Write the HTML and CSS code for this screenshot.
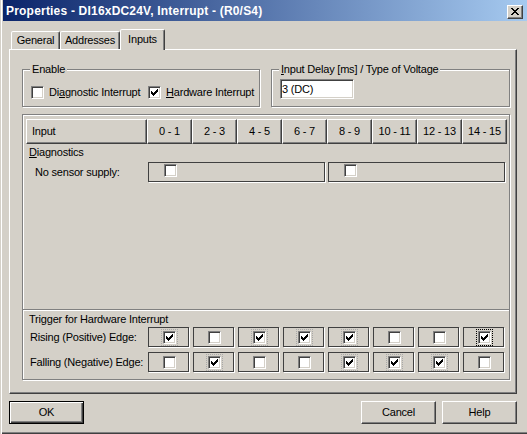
FILE: index.html
```html
<!DOCTYPE html>
<html>
<head>
<meta charset="utf-8">
<title>Properties</title>
<link rel="stylesheet" href="styles.css">
</head>
<body>
<div class="window">
  <div class="titlebar">
    <span class="title">Properties - DI16xDC24V, Interrupt - (R0/S4)</span>
    <div class="close"><svg width="8" height="7" viewBox="0 0 8 7" shape-rendering="crispEdges"><path fill="#000" d="M0 0h2v1H0zM6 0h2v1H6zM1 1h2v1H1zM5 1h2v1H5zM2 2h4v1H2zM3 3h2v1H3zM2 4h4v1H2zM1 5h2v1H1zM5 5h2v1H5zM0 6h2v1H0zM6 6h2v1H6z"/></svg></div>
  </div>
  <div class="content">
    <div class="tabs">
      <div class="tab tab-general">General</div>
      <div class="tab tab-addresses">Addresses</div>
      <div class="tab tab-inputs active">Inputs</div>
    </div>
    <div class="panel">
      <div class="groups">
        <div class="group enable">
          <div class="legend">Enable</div>
          <div class="enable-row">
            <div class="opt opt-first"><span class="cb"></span><span>Di<u>a</u>gnostic Interrupt</span></div>
            <div class="opt"><span class="cb"><svg viewBox="1 1 11 11" shape-rendering="crispEdges"><path d="M9 3h1v1H9zM8 4h2v1H8zM3 5h1v1H3zM7 5h3v1H7zM3 6h2v1H3zM6 6h3v1H6zM3 7h5v1H3zM4 8h3v1H4zM5 9h1v1H5z"/></svg></span><span><u>H</u>ardware Interrupt</span></div>
          </div>
        </div>
        <div class="group delay">
          <div class="legend"><u>I</u>nput Delay [ms] / Type of Voltage</div>
          <div class="textbox">3 (DC)</div>
        </div>
      </div>
      <div class="table">
        <div class="upper">
          <div class="grid header">
            <div class="hcell hfirst">Input</div>
            <div class="hcell">0 - 1</div>
            <div class="hcell">2 - 3</div>
            <div class="hcell">4 - 5</div>
            <div class="hcell">6 - 7</div>
            <div class="hcell">8 - 9</div>
            <div class="hcell">10 - 11</div>
            <div class="hcell">12 - 13</div>
            <div class="hcell">14 - 15</div>
          </div>
          <div class="section-label"><u>D</u>iagnostics</div>
          <div class="grid sensor-row">
            <div class="row-label sensor-label">No sensor supply:</div>
            <div class="sensor-box"><span class="cb"></span></div>
            <div class="sensor-box"><span class="cb"></span></div>
          </div>
        </div>
        <div class="lower">
          <div class="trig-label">Trigger for Hardware Interrupt</div>
          <div class="grid trig-row">
            <div class="row-label">Rising (Positive) Edge:</div>
            <div class="tbox"><span class="cb fx"><svg viewBox="1 1 11 11" shape-rendering="crispEdges"><path d="M9 3h1v1H9zM8 4h2v1H8zM3 5h1v1H3zM7 5h3v1H7zM3 6h2v1H3zM6 6h3v1H6zM3 7h5v1H3zM4 8h3v1H4zM5 9h1v1H5z"/></svg></span></div>
            <div class="tbox"><span class="cb"></span></div>
            <div class="tbox"><span class="cb fx"><svg viewBox="1 1 11 11" shape-rendering="crispEdges"><path d="M9 3h1v1H9zM8 4h2v1H8zM3 5h1v1H3zM7 5h3v1H7zM3 6h2v1H3zM6 6h3v1H6zM3 7h5v1H3zM4 8h3v1H4zM5 9h1v1H5z"/></svg></span></div>
            <div class="tbox"><span class="cb fx"><svg viewBox="1 1 11 11" shape-rendering="crispEdges"><path d="M9 3h1v1H9zM8 4h2v1H8zM3 5h1v1H3zM7 5h3v1H7zM3 6h2v1H3zM6 6h3v1H6zM3 7h5v1H3zM4 8h3v1H4zM5 9h1v1H5z"/></svg></span></div>
            <div class="tbox"><span class="cb fx"><svg viewBox="1 1 11 11" shape-rendering="crispEdges"><path d="M9 3h1v1H9zM8 4h2v1H8zM3 5h1v1H3zM7 5h3v1H7zM3 6h2v1H3zM6 6h3v1H6zM3 7h5v1H3zM4 8h3v1H4zM5 9h1v1H5z"/></svg></span></div>
            <div class="tbox"><span class="cb"></span></div>
            <div class="tbox"><span class="cb"></span></div>
            <div class="tbox"><span class="cb focus"><svg viewBox="1 1 11 11" shape-rendering="crispEdges"><path d="M9 3h1v1H9zM8 4h2v1H8zM3 5h1v1H3zM7 5h3v1H7zM3 6h2v1H3zM6 6h3v1H6zM3 7h5v1H3zM4 8h3v1H4zM5 9h1v1H5z"/></svg></span></div>
          </div>
          <div class="grid trig-row trig-row2">
            <div class="row-label">Falling (Negative) Edge:</div>
            <div class="tbox"><span class="cb"></span></div>
            <div class="tbox"><span class="cb fx"><svg viewBox="1 1 11 11" shape-rendering="crispEdges"><path d="M9 3h1v1H9zM8 4h2v1H8zM3 5h1v1H3zM7 5h3v1H7zM3 6h2v1H3zM6 6h3v1H6zM3 7h5v1H3zM4 8h3v1H4zM5 9h1v1H5z"/></svg></span></div>
            <div class="tbox"><span class="cb"></span></div>
            <div class="tbox"><span class="cb"></span></div>
            <div class="tbox"><span class="cb fx"><svg viewBox="1 1 11 11" shape-rendering="crispEdges"><path d="M9 3h1v1H9zM8 4h2v1H8zM3 5h1v1H3zM7 5h3v1H7zM3 6h2v1H3zM6 6h3v1H6zM3 7h5v1H3zM4 8h3v1H4zM5 9h1v1H5z"/></svg></span></div>
            <div class="tbox"><span class="cb fx"><svg viewBox="1 1 11 11" shape-rendering="crispEdges"><path d="M9 3h1v1H9zM8 4h2v1H8zM3 5h1v1H3zM7 5h3v1H7zM3 6h2v1H3zM6 6h3v1H6zM3 7h5v1H3zM4 8h3v1H4zM5 9h1v1H5z"/></svg></span></div>
            <div class="tbox"><span class="cb fx"><svg viewBox="1 1 11 11" shape-rendering="crispEdges"><path d="M9 3h1v1H9zM8 4h2v1H8zM3 5h1v1H3zM7 5h3v1H7zM3 6h2v1H3zM6 6h3v1H6zM3 7h5v1H3zM4 8h3v1H4zM5 9h1v1H5z"/></svg></span></div>
            <div class="tbox"><span class="cb"></span></div>
          </div>
        </div>
      </div>
    </div>
    <div class="buttons">
      <div class="btn default">OK</div>
      <div class="spacer"></div>
      <div class="btn">Cancel</div>
      <div class="btn btn-help">Help</div>
    </div>
  </div>
</div>
</body>
</html>
```
FILE: styles.css
```css
* { box-sizing: border-box; }
html, body { margin: 0; padding: 0; }
body {
  width: 527px;
  height: 434px;
  overflow: hidden;
  background: #d4d0c8;
  font-family: "Liberation Sans", Arial, sans-serif;
  font-size: 11px;
  line-height: 13px;
  letter-spacing: -0.2px;
  color: #000;
}
u { text-decoration: underline; text-underline-offset: 1px; }

.window {
  width: 527px;
  height: 434px;
  background: #d4d0c8;
  box-shadow: inset 1px 0 #d4d0c8, inset 2px 0 #fff, inset 0 -1px #404040, inset 0 -2px #808080;
}

.titlebar {
  height: 21px;
  margin-left: 3px;
  padding: 2px 4px 0 3px;
  display: flex;
  align-items: center;
  justify-content: space-between;
  background: linear-gradient(to right, #0a246a, #a6caf0);
}
.title {
  color: #fff;
  font-weight: bold;
  font-size: 12px;
  letter-spacing: 0.2px;
  white-space: nowrap;
}
.close {
  width: 16px;
  height: 14px;
  background: #d4d0c8;
  border: 1px solid;
  border-color: #fff #404040 #404040 #fff;
  box-shadow: inset -1px -1px #808080;
  display: flex;
  align-items: center;
  justify-content: center;
}
.close svg { display: block; }

.content { padding: 0 10px 0 9px; }

.tabs {
  height: 28px;
  padding-left: 2px;
  display: flex;
  align-items: flex-end;
}
.tab {
  height: 18px;
  border: 1px solid;
  border-bottom: none;
  border-color: #fff #404040 transparent #fff;
  border-radius: 2px 2px 0 0;
  box-shadow: inset -1px 0 #808080;
  display: flex;
  align-items: center;
  justify-content: center;
  white-space: nowrap;
  background: #d4d0c8;
}
.tab-general { width: 49px; }
.tab-addresses { width: 60px; }
.tab-inputs { width: 45px; }
.tab.active {
  height: 21px;
  margin-bottom: -1px;
  padding-bottom: 2px;
  position: relative;
  z-index: 1;
}

.panel {
  height: 345px;
  border: 1px solid;
  border-color: #fff #404040 #404040 #fff;
  box-shadow: inset -1px -1px #808080;
  padding: 19px 0 0 12px;
}

.groups { display: flex; gap: 11px; }
.group {
  height: 38px;
  border: 1px solid #808080;
  box-shadow: inset 1px 1px #fff, 1px 1px #fff;
}
.enable { width: 238px; }
.delay { width: 239px; }
.legend {
  width: fit-content;
  margin: -7px 0 0 7px;
  padding: 0 2px;
  background: #d4d0c8;
  white-space: nowrap;
}
.enable-row {
  display: flex;
  align-items: center;
  margin: 10px 0 0 8px;
}
.opt { display: flex; align-items: center; gap: 5px; white-space: nowrap; }
.opt-first { width: 117px; }

.textbox {
  width: 74px;
  height: 20px;
  margin: 3px 0 0 8px;
  background: #fff;
  border: 1px solid;
  border-color: #808080 #fff #fff #808080;
  box-shadow: inset 1px 1px #404040, inset -1px -1px #d4d0c8;
  padding-left: 1px;
  line-height: 18px;
}

.cb {
  display: block;
  flex: none;
  width: 13px;
  height: 13px;
  background: #fff;
  border: 1px solid;
  border-color: #808080 #fff #fff #808080;
  box-shadow: inset 1px 1px #404040, inset -1px -1px #d4d0c8;
}
.cb svg { display: block; width: 11px; height: 11px; fill: #000; }
.cb.fx { outline: 1px dotted #a8a8a8; outline-offset: 1px; }
.cb.focus { outline: 1px dotted #000; outline-offset: 1px; }

.table {
  width: 488px;
  height: 266px;
  margin-top: 7px;
  border: 1px solid #808080;
  box-shadow: inset 1px 1px #fff, 1px 1px #fff;
  display: flex;
  flex-direction: column;
}
.upper { flex: 1; padding: 4px 0 0 3px; }
.grid {
  display: grid;
  grid-template-columns: 121px repeat(8, 45px);
}
.header { height: 25px; }
.hcell {
  border: 1px solid;
  border-color: #fff #404040 #404040 #fff;
  box-shadow: inset -1px -1px #808080;
  display: flex;
  align-items: center;
  justify-content: center;
  white-space: nowrap;
}
.hfirst { justify-content: flex-start; padding-left: 5px; }

.section-label { margin-top: 2px; padding-left: 3px; }
.sensor-row { margin-top: 3px; height: 20px; }
.row-label { align-self: center; padding-left: 4px; white-space: nowrap; }
.sensor-label { padding-left: 9px; }
.sensor-box {
  grid-column: span 4;
  margin: 0 2px 0 1px;
  border: 1px solid #404040;
  box-shadow: 1px 1px #fff;
  padding: 1px 0 0 15px;
}

.lower {
  height: 70px;
  border-top: 1px solid #808080;
  box-shadow: inset 0 1px #fff;
  padding: 3px 0 0 3px;
}
.trig-label { padding-left: 3px; }
.trig-row { margin-top: 1px; height: 20px; }
.trig-row2 { margin-top: 5px; }
.tbox {
  width: 41px;
  margin-left: 1px;
  border: 1px solid #404040;
  box-shadow: 1px 1px #fff;
  padding: 3px 0 0 14px;
}

.buttons {
  display: flex;
  margin-top: 7px;
}
.spacer { flex: 1; }
.btn {
  width: 75px;
  height: 23px;
  border: 1px solid;
  border-color: #fff #404040 #404040 #fff;
  box-shadow: inset -1px -1px #808080;
  display: flex;
  align-items: center;
  justify-content: center;
}
.btn-help { margin-left: 6px; }
.btn.default {
  border-color: #000;
  box-shadow: inset 1px 1px #fff, inset -1px -1px #404040, inset -2px -2px #808080;
}
```
